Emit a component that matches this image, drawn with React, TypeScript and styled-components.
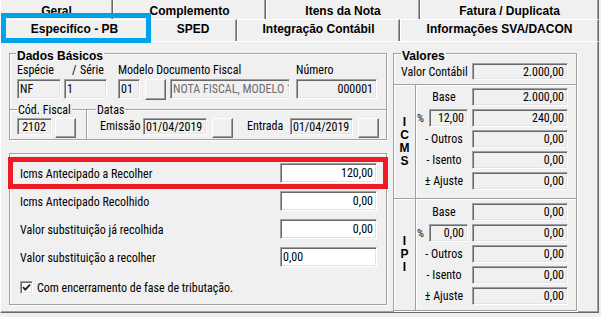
import React from "react";
import styled, { createGlobalStyle, css } from "styled-components";

const NARROW = `"Roboto Condensed", "Liberation Sans Narrow", "Arial Narrow", "Liberation Sans", Arial, sans-serif`;
const BOLD = `"Liberation Sans", Arial, sans-serif`;

const GlobalStyle = createGlobalStyle`
  html, body { margin: 0; padding: 0; background: #f0f0f0; }
  body { font-family: ${NARROW}; font-size: 12px; color: #000; }
  * { box-sizing: border-box; }
`;

const Screen = styled.div`
  position: relative;
  width: 601px;
  height: 317px;
  overflow: hidden;
  background: #f0f0f0;
  display: flex;
  flex-direction: column;
`;

const TabRow = styled.div<{ $h: number }>`
  display: flex;
  flex: none;
  height: ${(p) => p.$h}px;
`;

const Tab = styled.div<{ $w: number; $back?: boolean }>`
  flex: none;
  width: ${(p) => p.$w}px;
  display: flex;
  align-items: center;
  justify-content: center;
  font-family: ${BOLD};
  font-weight: bold;
  font-size: 12px;
  white-space: nowrap;
  border-left: 1px solid #fff;
  border-right: 1px solid #696969;
  box-shadow: inset -1px 0 0 #a0a0a0;
  ${(p) =>
    p.$back
      ? css`
          padding-top: 3px;
        `
      : css`
          border-top: 1px solid #fff;
          padding-bottom: 4px;
        `}
`;

const Page = styled.div`
  flex: none;
  width: 599px;
  height: 272px;
  border: 1px solid;
  border-color: #fff #696969 #696969 #fff;
  box-shadow: inset -1px -1px 0 #a0a0a0;
  display: flex;
  gap: 6px;
  padding: 11px 0 0 8px;
`;

const LeftColumn = styled.div`
  flex: none;
  width: 378px;
  display: flex;
  flex-direction: column;
  gap: 13px;
`;

const GroupBox = styled.div<{ $w: number; $h: number }>`
  position: relative;
  flex: none;
  width: ${(p) => p.$w}px;
  height: ${(p) => p.$h}px;
  border: 1px solid #a0a0a0;
  box-shadow: inset 1px 1px 0 #fff, 1px 1px 0 #fff;
  display: flex;
  flex-direction: column;
`;

const Caption = styled.span<{ $left: number; $bold?: boolean }>`
  position: absolute;
  left: ${(p) => p.$left}px;
  top: ${(p) => (p.$bold ? -5 : -7)}px;
  padding: 0 1px;
  background: #f0f0f0;
  line-height: 14px;
  white-space: nowrap;
  ${(p) =>
    p.$bold
      ? css`
          font-family: ${BOLD};
          font-weight: bold;
          font-size: 12px;
        `
      : css`
          font-family: ${NARROW};
          font-size: 12px;
        `}
`;

const TopSection = styled.div`
  flex: none;
  height: 55px;
  padding: 9px 0 0 7px;
  display: flex;
  flex-direction: column;
  gap: 2px;
`;

const LabelRow = styled.div`
  display: flex;
  height: 14px;
  line-height: 14px;
`;

const Label = styled.span<{ $w?: number }>`
  flex: none;
  white-space: nowrap;
  ${(p) =>
    p.$w !== undefined &&
    css`
      width: ${p.$w}px;
    `}
`;

const InputRow = styled.div`
  display: flex;
  align-items: flex-start;
`;

const Field = styled.div<{
  $w: number;
  $h: number;
  $white?: boolean;
  $align?: "left" | "right" | "center";
  $muted?: boolean;
  $ml?: number;
}>`
  flex: none;
  width: ${(p) => p.$w}px;
  height: ${(p) => p.$h}px;
  margin-left: ${(p) => p.$ml ?? 0}px;
  background: ${(p) => (p.$white ? "#fff" : "#f0f0f0")};
  border: 1px solid;
  border-color: #a0a0a0 #fff #fff #a0a0a0;
  box-shadow: inset 1px 1px 0 #696969, inset -1px -1px 0 #e3e3e3;
  padding: 0 3px 0 2px;
  display: flex;
  align-items: center;
  justify-content: ${(p) =>
    p.$align === "right" ? "flex-end" : p.$align === "center" ? "center" : "flex-start"};
  overflow: hidden;
  white-space: nowrap;
  color: ${(p) => (p.$muted ? "#6d6d6d" : "#000")};
  font-family: ${NARROW};
  font-size: 12px;
`;

const SmallButton = styled.button<{ $w: number; $h: number; $ml?: number }>`
  flex: none;
  width: ${(p) => p.$w}px;
  height: ${(p) => p.$h}px;
  margin: 0 0 0 ${(p) => p.$ml ?? 0}px;
  padding: 0;
  background: #f0f0f0;
  border: 1px solid;
  border-color: #fff #696969 #696969 #fff;
  box-shadow: inset -1px -1px 0 #a0a0a0;
  border-radius: 0;
`;

const SubRow = styled.div`
  flex: none;
  height: 30px;
  display: flex;
`;

const SubGroup = styled.div<{ $w?: number; $divider?: boolean; $pl: number }>`
  position: relative;
  flex: ${(p) => (p.$w ? "none" : "1")};
  ${(p) =>
    p.$w &&
    css`
      width: ${p.$w}px;
    `}
  border-top: 1px solid #a0a0a0;
  border-right: ${(p) => (p.$divider ? "1px solid #a0a0a0" : "none")};
  box-shadow: inset 0 1px 0 #fff ${(p) => (p.$divider ? ", 1px 0 0 #fff" : "")};
  padding: 8px 0 0 ${(p) => p.$pl}px;
  display: flex;
  align-items: flex-start;
`;

const InlineLabel = styled.span<{ $w: number; $h: number; $pl?: number }>`
  flex: none;
  width: ${(p) => p.$w}px;
  height: ${(p) => p.$h}px;
  line-height: ${(p) => p.$h}px;
  padding-left: ${(p) => p.$pl ?? 0}px;
  white-space: nowrap;
`;

const IcmsBody = styled.div`
  display: flex;
  flex-direction: column;
  gap: 8px;
  padding: 9px 9px 0 10px;
`;

const IcmsRow = styled.div`
  display: flex;
  height: 20px;
  align-items: center;
  justify-content: space-between;
`;

const RowLabel = styled.span`
  white-space: nowrap;
  padding-top: 2px;
`;

const CheckRow = styled.label`
  display: flex;
  align-items: center;
  gap: 4px;
  height: 13px;
  margin-top: 6px;
  white-space: nowrap;
`;

const CheckBox = styled.span`
  flex: none;
  width: 13px;
  height: 13px;
  background: #fff;
  border: 1px solid;
  border-color: #a0a0a0 #fff #fff #a0a0a0;
  box-shadow: inset 1px 1px 0 #696969, inset -1px -1px 0 #e3e3e3;
  display: flex;
  align-items: center;
  justify-content: center;
`;

const ValuesBody = styled.div`
  display: flex;
  flex-direction: column;
  padding: 9px 0 0 0;
`;

const TotalRow = styled.div`
  display: flex;
  height: 17px;
  align-items: center;
  justify-content: space-between;
  padding: 0 8px 0 7px;
  margin-bottom: 4px;
`;

const TaxSection = styled.div<{ $h: number }>`
  flex: none;
  height: ${(p) => p.$h}px;
  display: flex;
  border-top: 1px solid #a0a0a0;
  box-shadow: inset 0 1px 0 #fff;
`;

const LetterColumn = styled.div`
  flex: none;
  width: 22px;
  border-right: 1px solid #a0a0a0;
  box-shadow: 1px 0 0 #fff;
  display: flex;
  flex-direction: column;
  align-items: center;
  justify-content: center;
  font-family: ${BOLD};
  font-weight: bold;
  font-size: 12px;
  line-height: 13px;
`;

const TaxRows = styled.div<{ $pt: number }>`
  flex: 1;
  display: flex;
  flex-direction: column;
  gap: 3px;
  padding: ${(p) => p.$pt}px 8px 0 0;
`;

const TaxRow = styled.div`
  display: flex;
  height: 18px;
  align-items: center;
`;

const TaxLabel = styled.span`
  flex: none;
  width: 56px;
  text-align: center;
  white-space: nowrap;
`;

const PercentCell = styled.div`
  flex: none;
  width: 56px;
  display: flex;
  align-items: center;
  height: 18px;
`;

const PercentSign = styled.span`
  flex: none;
  width: 13px;
  padding-left: 1px;
  font-size: 11px;
`;

const BlueMark = styled.div`
  position: absolute;
  left: 1px;
  top: 13px;
  width: 150px;
  height: 30px;
  border: 5px solid #00a2e8;
  pointer-events: none;
`;

const RedMark = styled.div`
  position: absolute;
  left: 8px;
  top: 157px;
  width: 380px;
  height: 32px;
  border: 5px solid #ed1c24;
  pointer-events: none;
`;

type TaxData = {
  letters: string[];
  base: string;
  rate: string;
  amount: string;
  outros: string;
  isento: string;
  ajuste: string;
};

const icms: TaxData = {
  letters: ["I", "C", "M", "S"],
  base: "2.000,00",
  rate: "12,00",
  amount: "240,00",
  outros: "0,00",
  isento: "0,00",
  ajuste: "0,00",
};

const ipi: TaxData = {
  letters: ["I", "P", "I"],
  base: "0,00",
  rate: "0,00",
  amount: "0,00",
  outros: "0,00",
  isento: "0,00",
  ajuste: "0,00",
};

function TaxBlock({ data, h, pt }: { data: TaxData; h: number; pt: number }) {
  return (
    <TaxSection $h={h}>
      <LetterColumn>
        {data.letters.map((l, i) => (
          <span key={i}>{l}</span>
        ))}
      </LetterColumn>
      <TaxRows $pt={pt}>
        <TaxRow>
          <TaxLabel>Base</TaxLabel>
          <Field $w={96} $h={18} $align="right">{data.base}</Field>
        </TaxRow>
        <TaxRow>
          <PercentCell>
            <PercentSign>%</PercentSign>
            <Field $w={39} $h={18} $align="right">{data.rate}</Field>
          </PercentCell>
          <Field $w={96} $h={18} $align="right">{data.amount}</Field>
        </TaxRow>
        <TaxRow>
          <TaxLabel>- Outros</TaxLabel>
          <Field $w={96} $h={18} $align="right">{data.outros}</Field>
        </TaxRow>
        <TaxRow>
          <TaxLabel>- Isento</TaxLabel>
          <Field $w={96} $h={18} $align="right">{data.isento}</Field>
        </TaxRow>
        <TaxRow>
          <TaxLabel>± Ajuste</TaxLabel>
          <Field $w={96} $h={18} $align="right">{data.ajuste}</Field>
        </TaxRow>
      </TaxRows>
    </TaxSection>
  );
}

const icmsRows: { label: string; value: string; align: "left" | "right" }[] = [
  { label: "Icms Antecipado a Recolher", value: "120,00", align: "right" },
  { label: "Icms Antecipado Recolhido", value: "0,00", align: "right" },
  { label: "Valor substituição já recolhida", value: "0,00", align: "right" },
  { label: "Valor substituição a recolher", value: "0,00", align: "left" },
];

export default function App() {
  return (
    <>
      <GlobalStyle />
      <Screen>
        <TabRow $h={19}>
          <Tab $w={113} $back>Geral</Tab>
          <Tab $w={153} $back>Complemento</Tab>
          <Tab $w={154} $back>Itens da Nota</Tab>
          <Tab $w={179} $back>Fatura / Duplicata</Tab>
        </TabRow>
        <TabRow $h={22}>
          <Tab $w={149}>Especifíco - PB</Tab>
          <Tab $w={88}>SPED</Tab>
          <Tab $w={163}>Integração Contábil</Tab>
          <Tab $w={199}>Informações SVA/DACON</Tab>
        </TabRow>
        <Page>
          <LeftColumn>
            <GroupBox $w={378} $h={87}>
              <Caption $left={6} $bold>
                Dados Básicos
              </Caption>
              <TopSection>
                <LabelRow>
                  <Label $w={55}>Espécie</Label>
                  <Label $w={8}>/</Label>
                  <Label $w={38}>Série</Label>
                  <Label $w={178}>Modelo Documento Fiscal</Label>
                  <Label>Número</Label>
                </LabelRow>
                <InputRow>
                  <Field $w={44} $h={20}>NF</Field>
                  <Field $w={43} $h={20} $ml={3}>1</Field>
                  <Field $w={22} $h={20} $ml={11}>01</Field>
                  <SmallButton $w={21} $h={21} $ml={5} />
                  <Field $w={120} $h={20} $ml={4} $muted>
                    NOTA FISCAL, MODELO 1 OU 1A
                  </Field>
                  <Field $w={81} $h={20} $ml={6} $align="right">
                    000001
                  </Field>
                </InputRow>
              </TopSection>
              <SubRow>
                <SubGroup $w={77} $divider $pl={7}>
                  <Caption $left={7}>Cód. Fiscal</Caption>
                  <Field $w={35} $h={17} $align="center">2102</Field>
                  <SmallButton $w={21} $h={20} $ml={3} />
                </SubGroup>
                <SubGroup $pl={13}>
                  <Caption $left={9}>Datas</Caption>
                  <InlineLabel $w={43} $h={17}>Emissão</InlineLabel>
                  <Field $w={64} $h={17}>01/04/2019</Field>
                  <SmallButton $w={21} $h={20} $ml={5} />
                  <InlineLabel $w={57} $h={17} $pl={14}>
                    Entrada
                  </InlineLabel>
                  <Field $w={63} $h={17}>01/04/2019</Field>
                  <SmallButton $w={21} $h={20} $ml={5} />
                </SubGroup>
              </SubRow>
            </GroupBox>
            <GroupBox $w={378} $h={152}>
              <IcmsBody>
                {icmsRows.map((r) => (
                  <IcmsRow key={r.label}>
                    <RowLabel>{r.label}</RowLabel>
                    <Field $w={97} $h={20} $white $align={r.align}>
                      {r.value}
                    </Field>
                  </IcmsRow>
                ))}
                <CheckRow>
                  <CheckBox>
                    <svg width="9" height="9" viewBox="0 0 9 9">
                      <path
                        d="M1 4.2 L3.3 6.6 L8 1.6"
                        fill="none"
                        stroke="#222"
                        strokeWidth="1.9"
                      />
                    </svg>
                  </CheckBox>
                  Com encerramento de fase de tributação.
                </CheckRow>
              </IcmsBody>
            </GroupBox>
          </LeftColumn>
          <GroupBox $w={184} $h={258}>
            <Caption $left={7} $bold>
              Valores
            </Caption>
            <ValuesBody>
              <TotalRow>
                <Label>Valor Contábil</Label>
                <Field $w={96} $h={17} $align="right">2.000,00</Field>
              </TotalRow>
              <TaxBlock data={icms} h={114} pt={3} />
              <TaxBlock data={ipi} h={112} pt={4} />
            </ValuesBody>
          </GroupBox>
        </Page>
        <BlueMark />
        <RedMark />
      </Screen>
    </>
  );
}
